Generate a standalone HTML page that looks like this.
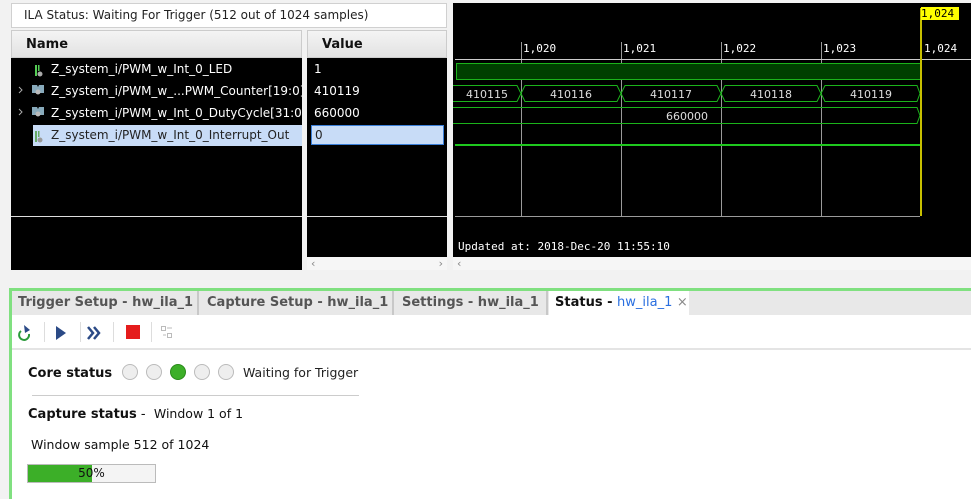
<!DOCTYPE html>
<html><head><style>
body{margin:0;width:971px;height:499px;background:#f2f2f2;font-family:"DejaVu Sans","Liberation Sans",sans-serif;font-size:12px;position:relative;overflow:hidden}
.a{position:absolute}
.blk{background:#000}
.t{color:#fff;white-space:nowrap}
.mono{font-family:"DejaVu Sans Mono","Liberation Mono",monospace;font-size:11px}
.gl{position:absolute;top:42px;width:1px;height:174px;background:#9a9a9a}
.tab{position:absolute;top:291px;height:24px;background:#e8e8e8;border-right:2px solid #c8c8c8;font-weight:bold;color:#555;font-size:13px;line-height:24px;padding-left:6px;box-sizing:border-box;white-space:nowrap;overflow:hidden}
.c{position:absolute;top:364px;width:16px;height:16px;border-radius:50%;background:#eee;border:1px solid #bbb;box-sizing:border-box}
</style></head><body>
<div class="a" style="left:11px;top:3px;width:436px;height:25px;background:#fff;border:1px solid #d0d0d0;box-sizing:border-box;font-size:12px;line-height:23px;padding-left:12px;color:#222">ILA Status: Waiting For Trigger (512 out of 1024 samples)</div>
<div class="a" style="left:11px;top:30px;width:291px;height:28px;background:linear-gradient(#f4f4f4,#e2e2e2);border:1px solid #ccc;box-sizing:border-box;font-weight:bold;font-size:13px;line-height:27px;padding-left:14px;color:#111">Name</div>
<div class="a" style="left:307px;top:30px;width:140px;height:28px;background:linear-gradient(#f4f4f4,#e2e2e2);border:1px solid #ccc;box-sizing:border-box;font-weight:bold;font-size:13px;line-height:27px;padding-left:14px;color:#111">Value</div>
<div class="a blk" style="left:11px;top:58px;width:291px;height:212px;overflow:hidden">
<div class="a" style="left:22px;top:67px;width:269px;height:21px;background:#c8dcf7"></div>
<svg class="a" style="left:0;top:0" width="291" height="90">
<g fill="#5c5" ><rect x="24" y="7" width="2" height="11"/><rect x="27" y="7" width="1.5" height="6"/></g><circle cx="29" cy="16" r="2.5" fill="#aaa"/>
<g fill="#6a6"><rect x="24" y="73" width="2" height="11"/><rect x="27" y="73" width="1.5" height="6"/></g><circle cx="29" cy="82" r="2.5" fill="#999"/>
<path d="M8 29l3 3-3 3M8 51l3 3-3 3" stroke="#aaa" fill="none"/>
<g fill="#8ab"><path d="M21 27h5l1 2 1-2h5v8h-12z"/><path d="M21 49h5l1 2 1-2h5v8h-12z"/></g>
<circle cx="27" cy="34" r="2.5" fill="#bbb"/><circle cx="27" cy="56" r="2.5" fill="#bbb"/>
</svg>
<div class="a t" style="left:40px;top:4px">Z_system_i/PWM_w_Int_0_LED</div>
<div class="a t" style="left:40px;top:26px">Z_system_i/PWM_w_...PWM_Counter[19:0]</div>
<div class="a t" style="left:40px;top:48px">Z_system_i/PWM_w_Int_0_DutyCycle[31:0]</div>
<div class="a t" style="left:40px;top:70px;color:#222">Z_system_i/PWM_w_Int_0_Interrupt_Out</div>
</div>
<div class="a blk" style="left:307px;top:58px;width:140px;height:199px"></div>
<div class="a" style="left:307px;top:257px;width:140px;height:13px;background:#f6f6f6;color:#888;font-size:11px;line-height:13px"><span style="position:absolute;left:4px">‹</span><span style="position:absolute;right:4px">›</span></div>
<div class="a" style="left:11px;top:216px;width:291px;height:1px;background:#ddd"></div>
<div class="a" style="left:307px;top:216px;width:140px;height:1px;background:#ddd"></div>
<div class="a" style="left:311px;top:125px;width:133px;height:20px;background:#c8dcf7;border:1px solid #3b7fd8;box-sizing:border-box"></div>
<div class="a t" style="left:314px;top:62px">1</div>
<div class="a t" style="left:314px;top:84px">410119</div>
<div class="a t" style="left:314px;top:106px">660000</div>
<div class="a t" style="left:315px;top:128px;color:#222">0</div>
<!-- wave -->
<div class="a blk" style="left:453px;top:3px;width:518px;height:254px"></div>
<div class="a" style="left:453px;top:257px;width:518px;height:13px;background:#f6f6f6;color:#888;font-size:11px;line-height:13px"><span style="position:absolute;left:4px">‹</span></div>
<div class="gl" style="left:521px"></div><div class="gl" style="left:621px"></div><div class="gl" style="left:721px"></div><div class="gl" style="left:821px"></div>
<div class="a t mono" style="left:523px;top:42px">1,020</div>
<div class="a t mono" style="left:623px;top:42px">1,021</div>
<div class="a t mono" style="left:723px;top:42px">1,022</div>
<div class="a t mono" style="left:823px;top:42px">1,023</div>
<div class="a t mono" style="left:924px;top:42px">1,024</div>
<div class="a" style="left:455px;top:59px;width:516px;height:1px;background:#ccc"></div>
<div class="a" style="left:455px;top:216px;width:465px;height:1px;background:#9a9a9a"></div>
<svg class="a" style="left:453px;top:60px" width="470" height="90">
<rect x="3.5" y="3.5" width="464" height="16" fill="#003f00" stroke="#1bb31b"/>
<g fill="none" stroke="#1bb31b" stroke-width="1">
<path d="M0 25.5H64l4 8-4 8H0"/>
<path d="M68 33.5l4-8H164l4 8-4 8H72z"/>
<path d="M168 33.5l4-8H264l4 8-4 8H172z"/>
<path d="M268 33.5l4-8H364l4 8-4 8H272z"/>
<path d="M368 33.5l4-8H464l3 8-3 8H372z"/>
<path d="M0 47.5H464l3 8-3 8H0"/>
</g>
<rect x="2" y="84" width="465" height="2" fill="#1ec81e"/>
<g fill="#ddd" font-family="DejaVu Sans,sans-serif" font-size="11" text-anchor="middle">
<text x="34" y="38">410115</text><text x="118" y="38">410116</text><text x="218" y="38">410117</text><text x="318" y="38">410118</text><text x="418" y="38">410119</text><text x="234" y="60">660000</text>
</g>
</svg>
<div class="a" style="left:920px;top:8px;width:2px;height:208px;background:#c8c000"></div>
<div class="a mono" style="left:921px;top:7px;width:38px;height:13px;background:#ffff00;color:#000;font-size:11px;line-height:13px">1,024</div>
<div class="a t mono" style="left:458px;top:240px;font-size:11px">Updated at: 2018-Dec-20 11:55:10</div>
<!-- bottom -->
<div class="a" style="left:9px;top:288px;width:962px;height:211px;background:#fff;border-left:3px solid #80e080;border-top:3px solid #80e080;box-sizing:border-box"></div>
<div class="a" style="left:12px;top:291px;width:959px;height:24px;background:#e8e8e8"></div>
<div class="tab" style="left:12px;width:187px">Trigger Setup - hw_ila_1</div>
<div class="tab" style="left:201px;width:193px">Capture Setup - hw_ila_1</div>
<div class="tab" style="left:396px;width:152px">Settings - hw_ila_1</div>
<div class="tab" style="left:549px;width:140px;background:#fff;color:#111;border:none">Status - <span style="color:#2a6fe0;font-weight:normal">hw_ila_1</span> <span style="color:#888;font-weight:normal">×</span></div>
<div class="a" style="left:12px;top:348px;width:959px;height:2px;background:#e4e4e4"></div>
<svg class="a" style="left:17px;top:323px" width="160" height="20">
<path d="M4 8a5 5 0 1 0 8 3" stroke="#2a9a3a" stroke-width="2" fill="none"/><path d="M7 2l6 5-5 3z" fill="#2b4a86"/>
<path d="M39 3l10 7-10 7z" fill="#2b4a86"/>
<path d="M71 4l5 6-5 6M77 4l5 6-5 6" stroke="#2b4a86" stroke-width="2.5" fill="none"/>
<rect x="109" y="2" width="14" height="14" fill="#e51c1c"/>
<g stroke="#bbb" fill="none"><rect x="144.5" y="3.5" width="4" height="4"/><rect x="150.5" y="10.5" width="4" height="4"/><path d="M150 5h5M146 12h3"/></g>
</svg>
<div class="a" style="left:44px;top:322px;width:1px;height:20px;background:#ddd"></div>
<div class="a" style="left:80px;top:322px;width:1px;height:20px;background:#ddd"></div>
<div class="a" style="left:113px;top:322px;width:1px;height:20px;background:#ddd"></div>
<div class="a" style="left:151px;top:322px;width:1px;height:20px;background:#ddd"></div>
<div class="a" style="left:28px;top:366px;font-weight:bold;font-size:13px;color:#111">Core status</div>
<div class="c" style="left:122px"></div><div class="c" style="left:146px"></div><div class="c" style="left:170px;background:#3caf28;border-color:#2a8a1a"></div><div class="c" style="left:194px"></div><div class="c" style="left:218px"></div>
<div class="a" style="left:243px;top:365px;font-size:12.5px;color:#222">Waiting for Trigger</div>
<div class="a" style="left:32px;top:395px;width:327px;height:1px;background:#ccc"></div>
<div class="a" style="left:28px;top:406px;font-size:13px;color:#111"><b>Capture status</b> -&nbsp; <span style="font-size:12.5px">Window 1 of 1</span></div>
<div class="a" style="left:31px;top:437px;font-size:12.5px;color:#111">Window sample 512 of 1024</div>
<div class="a" style="left:27px;top:464px;width:129px;height:19px;background:#f4f4f4;border:1px solid #bbb;box-sizing:border-box"><div style="width:64px;height:17px;background:#3caf28"></div><div style="position:absolute;left:0;top:0;width:127px;text-align:center;line-height:17px;font-size:12px;color:#111">50%</div></div>
</body></html>
